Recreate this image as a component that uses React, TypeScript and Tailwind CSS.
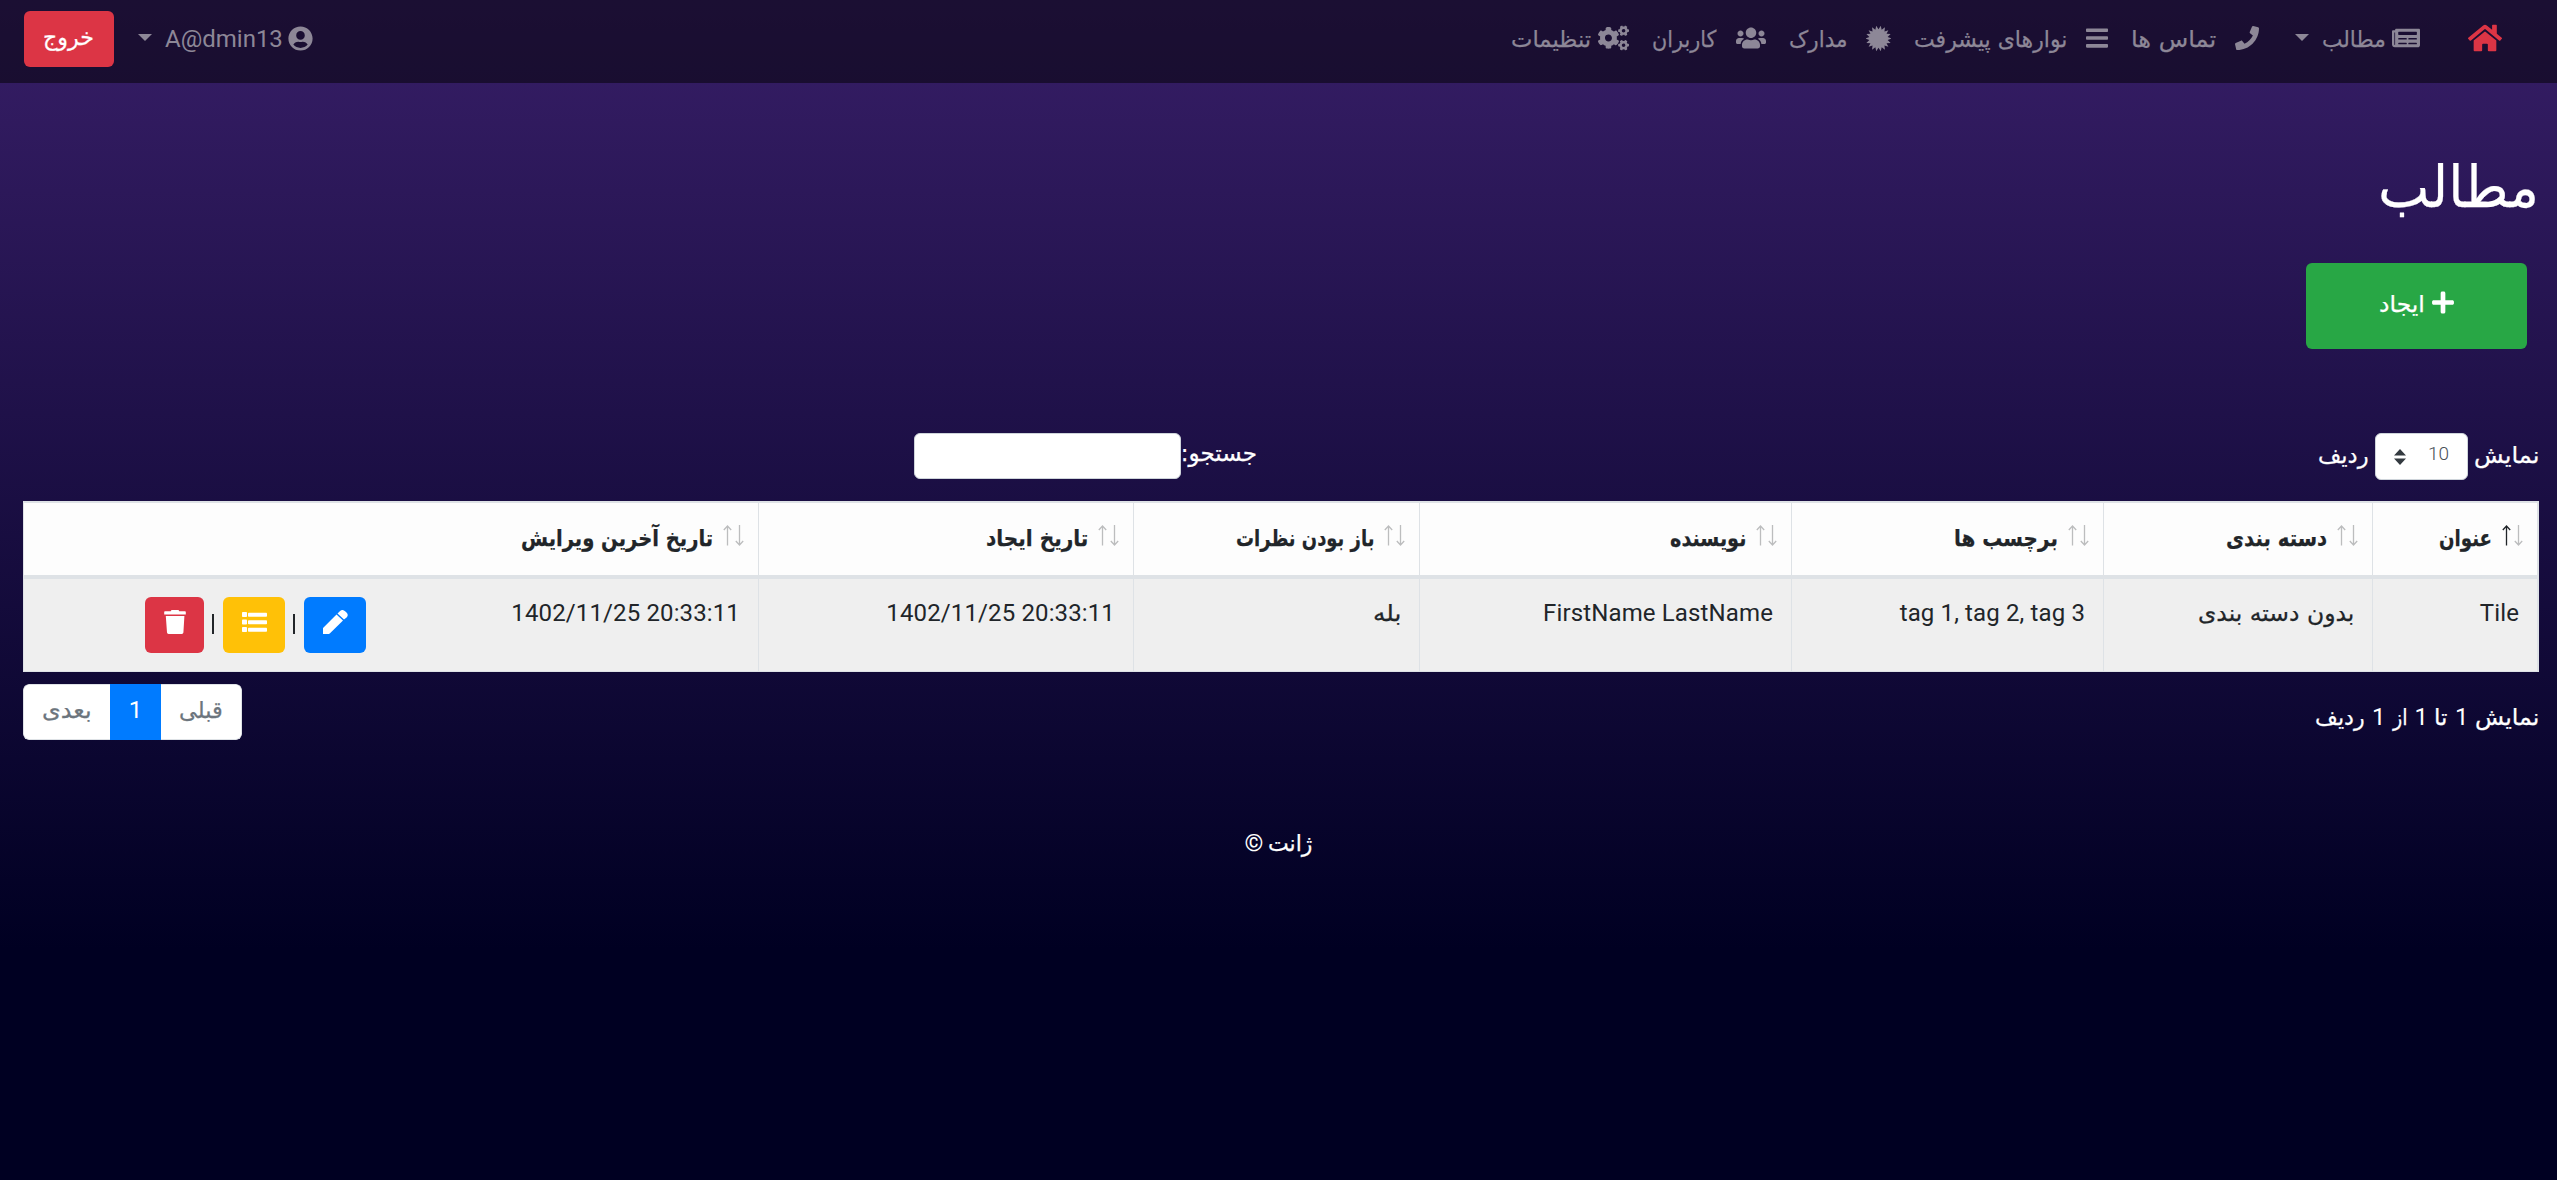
import React, { useLayoutEffect, useRef, useState } from "react";
import { FaHome, FaNewspaper, FaPhone, FaBars, FaUsers, FaCogs, FaUserCircle, FaPlus } from "react-icons/fa";

type FaProps = { children: React.ReactNode; w: number; className?: string };

/** Persian label condensed or widened to a given width in pixels. */
function Fa({ children, w, className = "" }: FaProps) {
  const ref = useRef<HTMLSpanElement>(null);
  const [ratio, setRatio] = useState(1);
  useLayoutEffect(() => {
    if (ref.current && ref.current.offsetWidth > 0) setRatio((w + 1) / ref.current.offsetWidth);
  }, [w]);
  return (
    <span className={`inline-flex shrink-0 justify-start whitespace-nowrap font-['DejaVu_Sans',sans-serif] ${className}`} style={{ width: w }}>
      <span ref={ref} className="inline-block shrink-0 origin-right [-webkit-text-stroke:0.25px_currentColor]" style={{ transform: `scaleX(${ratio})` }}>
        {children}
      </span>
    </span>
  );
}

function Caret() {
  return <span className="block h-0 w-0 border-x-[7px] border-t-[7px] border-x-transparent border-t-current" />;
}

const burst = Array.from({ length: 36 }, (_, i) => {
  const r = i % 2 === 0 ? 12.9 : 9.3;
  const a = ((i + 1) * Math.PI) / 18;
  return `${(12.5 + r * Math.sin(a)).toFixed(2)},${(12.5 - r * Math.cos(a)).toFixed(2)}`;
}).join(" ");

function StarburstIcon({ className }: { className?: string }) {
  return (
    <svg viewBox="0 0 25 25" fill="currentColor" className={className}>
      <polygon points={burst} />
    </svg>
  );
}

function SortArrows({ active = false }: { active?: boolean }) {
  return (
    <svg width="21" height="21" viewBox="0 0 21 21" fill="none" className="mt-[22px] shrink-0">
      <path d="M4.500 20.500V1M0.800 5L4.500 1L8.200 5" stroke={active ? "#212529" : "#bcbdbe"} strokeWidth="1.3" />
      <path d="M16.500 0v19.500M12.800 16L16.500 20L20.200 16" stroke="#bcbdbe" strokeWidth="1.3" />
    </svg>
  );
}

function TrashIcon() {
  return (
    <svg width="22" height="24" viewBox="0 0 22 24" fill="currentColor">
      <path d="M7.500 0h7l.8 1.200H21a.8.8 0 0 1 .8.8v2.600H.2V2A.8.8 0 0 1 1 1.200h5.700zM1.800 6h18.600l-1 16.500a1.600 1.600 0 0 1-1.600 1.500H4.600A1.600 1.600 0 0 1 3 22.500z" />
    </svg>
  );
}

function ListIcon() {
  return (
    <svg width="25" height="20" viewBox="0 0 25 20" fill="currentColor">
      <rect x="0" y="0" width="5" height="5" rx=".8" />
      <rect x="6" y=".7" width="19" height="4" rx=".8" />
      <rect x="0" y="7.500" width="5" height="5" rx=".8" />
      <rect x="6" y="8.200" width="19" height="4" rx=".8" />
      <rect x="0" y="15" width="5" height="5" rx=".8" />
      <rect x="6" y="15.700" width="19" height="4" rx=".8" />
    </svg>
  );
}

function PencilIcon() {
  return (
    <svg width="25" height="24" viewBox="0 0 25 24" fill="currentColor">
      <path d="M0 24v-6L13.500 4.500l6.500 6L7 23.200 6 24zM14.500 3.600l2.600-2.500a3.600 3.600 0 0 1 5 .2l1.400 1.300a3.400 3.400 0 0 1 .1 4.800L21 9.600z" />
    </svg>
  );
}

type Column = { title: string; titleW: number; value: string; valueW?: number; width: string; active?: boolean };

const columns: Column[] = [
  { title: "عنوان", titleW: 52, value: "Tile", width: "w-[165px]", active: true },
  { title: "دسته بندی", titleW: 100, value: "بدون دسته بندی", valueW: 155, width: "w-[269px]" },
  { title: "برچسب ها", titleW: 103, value: "tag 1, tag 2, tag 3", width: "w-[312px]" },
  { title: "نویسنده", titleW: 75, value: "FirstName LastName", width: "w-[372px]" },
  { title: "باز بودن نظرات", titleW: 137, value: "بله", valueW: 27, width: "w-[286px]" },
  { title: "تاریخ ایجاد", titleW: 101, value: "1402/11/25 20:33:11", width: "w-[375px]" },
  { title: "تاریخ آخرین ویرایش", titleW: 191, value: "1402/11/25 20:33:11", width: "w-[384px]" },
];

export default function App() {
  return (
    <div
      dir="rtl"
      className="h-[1180px] w-full overflow-hidden bg-[linear-gradient(180deg,#371e67_0px,#000022_950px)] font-[Roboto,'DejaVu_Sans',sans-serif] text-[23px] leading-9 text-white"
    >
      <nav className="flex h-[83px] items-start bg-[#000000]/50 text-[#8d8797]">
        <FaHome className="mt-[22px] mr-[55px] h-[32px] w-[34px] text-[#dc3545]" />
        <FaNewspaper className="mt-[25px] mr-[48px] h-[26px] w-[28px]" />
        <Fa className="mt-[21px] mr-[6px]" w={63}>مطالب</Fa>
        <div className="mt-[34px] mr-[14px]"><Caret /></div>
        <FaPhone className="mt-[26px] mr-[36px] h-[24px] w-[24px]" />
        <Fa className="mt-[21px] mr-[19px]" w={84}>تماس ها</Fa>
        <FaBars className="mt-[25px] mr-[24px] h-[26px] w-[22px]" />
        <Fa className="mt-[21px] mr-[19px]" w={152}>نوارهای پیشرفت</Fa>
        <StarburstIcon className="mt-[26px] mr-[24px] h-[25px] w-[25px]" />
        <Fa className="mt-[21px] mr-[19px]" w={57}>مدارک</Fa>
        <FaUsers className="mt-[25px] mr-[24px] h-[26px] w-[30px]" />
        <Fa className="mt-[21px] mr-[20px]" w={63}>کاربران</Fa>
        <FaCogs className="mt-[25px] mr-[24px] h-[26px] w-[31px]" />
        <Fa className="mt-[21px] mr-[7px]" w={79}>تنظیمات</Fa>
        <div className="mr-auto ml-[24px] flex">
          <FaUserCircle className="mt-[26px] h-[25px] w-[25px]" />
          <span className="mt-[21px] mr-[5px] text-[24px]">A@dmin13</span>
          <div className="mt-[34px] mr-[13px]"><Caret /></div>
          <button className="mt-[11px] mr-[24px] flex h-[56px] w-[90px] justify-center rounded-[6px] bg-[#dc3545] pt-[8px] text-white">
            <Fa w={50}>خروج</Fa>
          </button>
        </div>
      </nav>

      <main className="pr-[18px] pl-[23px]">
        <h1 className="flex h-[180px] pt-[68px] text-[58px] leading-[72px]"><Fa w={160}>مطالب</Fa></h1>
        <button className="mr-[12px] flex h-[86px] w-[221px] items-start justify-center gap-[7px] rounded-[6px] bg-[#28a745] pt-[23px]">
          <FaPlus className="mt-[4px] h-[25px] w-[22px]" />
          <Fa w={45}>ایجاد</Fa>
        </button>

        <div className="mt-[84px] flex h-[68px] items-start">
          <Fa className="mt-[4px]" w={64}>نمایش</Fa>
          <div className="mr-[7px] flex h-[47px] w-[93px] rounded-[6px] border border-[#ced4da] bg-white pr-[18px]">
            <span className="w-[21px] pt-[2px] text-[19px] font-light text-[#495057]">10</span>
            <svg width="12" height="16" viewBox="0 0 12 16" className="mt-[15px] mr-[22px]" fill="#343a40">
              <path d="M0 6.500L6 0l6 6.500zM0 9.500h12L6 16z" />
            </svg>
          </div>
          <Fa className="mt-[4px] mr-[6px]" w={50}>ردیف</Fa>
          <Fa className="mt-[2px] mr-[1062px]" w={75}>جستجو:</Fa>
          <input className="mr-px h-[46px] w-[267px] rounded-[6px] border border-[#ced4da] bg-white" />
        </div>

        <div className="flex h-[171px] w-[2516px] border-t-2 border-r-2 border-b border-l border-[#dee2e6] text-[#212529]">
          {columns.map((c, i) => (
            <div key={c.title} className={`${c.width} shrink-0 ${i < 6 ? "border-l border-[#dee2e6]" : ""}`}>
              <div className="flex h-[76px] border-b-4 border-[#dee2e6] bg-[#fdfdfd] pr-[14px]">
                <SortArrows active={c.active} />
                <Fa className="mt-[17px] mr-[10px] font-bold" w={c.titleW}>{c.title}</Fa>
              </div>
              <div className="flex h-[92px] bg-[#efefef] pt-[16px] pr-[18px]">
                {c.valueW ? <Fa w={c.valueW}>{c.value}</Fa> : <span dir="ltr" className="text-[24px] tracking-[0.13px]">{c.value}</span>}
              </div>
            </div>
          ))}
          <div className="flex-1">
            <div className="h-[76px] border-b-4 border-[#dee2e6] bg-[#fdfdfd]" />
            <div className="flex h-[92px] items-start bg-[#efefef] pt-[18px] pr-[8px]">
              <button className="flex h-[56px] w-[62px] justify-center rounded-[6px] bg-[#007bff] pt-[13px] text-white"><PencilIcon /></button>
              <span className="mt-[17px] mr-[9px] h-[20px] w-[2px] bg-[#212529]" />
              <button className="mr-[8px] flex h-[56px] w-[62px] justify-center rounded-[6px] bg-[#ffc107] pt-[15px] text-white"><ListIcon /></button>
              <span className="mt-[17px] mr-[9px] h-[20px] w-[2px] bg-[#212529]" />
              <button className="mr-[8px] flex h-[56px] w-[59px] justify-center rounded-[6px] bg-[#dc3545] pt-[13px] text-white"><TrashIcon /></button>
            </div>
          </div>
        </div>

        <div className="flex justify-between pt-[12px]">
          <div className="mt-[15px] flex gap-[7.5px]">
            <Fa w={63}>نمایش</Fa>
            <span className="text-[24px]">1</span>
            <Fa w={12}>تا</Fa>
            <span className="text-[24px]">1</span>
            <Fa w={14}>از</Fa>
            <span className="text-[24px]">1</span>
            <Fa w={49}>ردیف</Fa>
          </div>
          <div className="flex h-[56px] overflow-hidden rounded-[6px] text-[#6c757d]">
            <div className="flex w-[81px] justify-center rounded-r-[6px] border-y border-r border-[#dee2e6] bg-white pt-[7px]"><Fa w={43}>قبلی</Fa></div>
            <div className="flex w-[51px] justify-center bg-[#007bff] pt-[8px] text-[24px] text-white">1</div>
            <div className="flex w-[87px] justify-center rounded-l-[6px] border-y border-l border-[#dee2e6] bg-white pt-[7px]"><Fa w={49}>بعدی</Fa></div>
          </div>
        </div>
      </main>

      <footer className="mt-[85px] flex justify-center gap-[6px]">
        <Fa w={43}>ژانت</Fa>
        <span className="text-[24px]">©</span>
      </footer>
    </div>
  );
}
